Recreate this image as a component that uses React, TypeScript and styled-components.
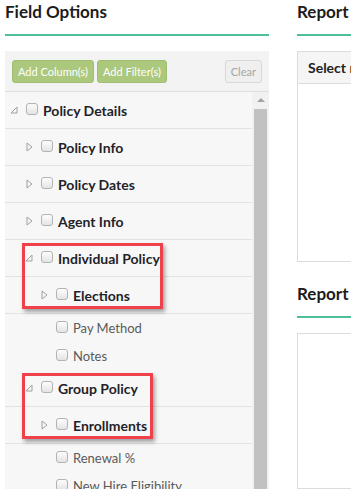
import styled, { createGlobalStyle } from 'styled-components';

const GlobalStyle = createGlobalStyle`
  html, body {
    margin: 0;
    padding: 0;
    background: #fff;
    overflow: hidden;
  }

  body {
    font-family: Lato, 'Liberation Sans', sans-serif;
  }
`;

const Page = styled.div`
  width: 640px;
  height: 489px;
  padding-left: 5px;
  box-sizing: border-box;
  display: grid;
  grid-template-columns: 264px 1fr;
  column-gap: 28px;
  overflow: hidden;
`;

const Column = styled.section`
  display: flex;
  flex-direction: column;
  min-height: 0;
`;

const SectionTitle = styled.h2<{ $spaced?: boolean }>`
  margin: ${(p) => (p.$spaced ? '20px' : '0')} 0 0;
  padding-bottom: 10px;
  font-size: 17px;
  font-weight: 700;
  line-height: 24px;
  color: #1c1c1c;
  white-space: nowrap;
  border-bottom: 2px solid #4dbf9b;
`;

const FieldPanel = styled.div`
  margin-top: 15px;
  flex: 1;
  min-height: 0;
  display: flex;
  flex-direction: column;
  background: #f7f7f7;
`;

const Toolbar = styled.div`
  height: 40px;
  padding: 0 7px;
  display: flex;
  align-items: center;
  gap: 3px;
  background: #f3f3f3;
  border-bottom: 1px solid #dedede;
`;

const ToolButton = styled.button<{ $plain?: boolean }>`
  height: 23px;
  padding: 0 5px;
  font-family: inherit;
  font-size: 11px;
  border-radius: 3px;
  border: 1px solid ${(p) => (p.$plain ? '#d8d8d8' : '#a0bf72')};
  background: ${(p) => (p.$plain ? '#efefef' : '#abc87c')};
  color: ${(p) => (p.$plain ? '#a5a5a5' : '#fff')};
  margin-left: ${(p) => (p.$plain ? 'auto' : '0')};
`;

const TreeArea = styled.div`
  flex: 1;
  min-height: 0;
  display: flex;
  overflow: hidden;
`;

const TreeList = styled.div`
  flex: 1;
  background: #f7f7f7;
`;

const Row = styled.div<{ $level: number; $leaf?: boolean }>`
  height: ${(p) => (p.$leaf ? '28px' : '36px')};
  padding-left: ${(p) => 2 + p.$level * 15}px;
  display: flex;
  align-items: center;
  border-bottom: ${(p) => (p.$leaf ? 'none' : '1px solid #e2e2e2')};
`;

const Toggle = styled.span`
  width: 14px;
  margin-right: 5px;
  flex: none;
  display: flex;
  justify-content: center;
  align-items: center;
`;

const Check = styled.span`
  width: 12px;
  height: 12px;
  margin: 0 5px 3px 0;
  flex: none;
  box-sizing: border-box;
  border: 1px solid #b3b3b3;
  border-radius: 3px;
  background: linear-gradient(#fdfdfd, #e4e4e4);
`;

const Label = styled.span<{ $leaf?: boolean }>`
  font-size: ${(p) => (p.$leaf ? '13px' : '14px')};
  font-weight: ${(p) => (p.$leaf ? 400 : 700)};
  color: ${(p) => (p.$leaf ? '#5a5a5a' : '#1f2329')};
  white-space: nowrap;
`;

// red annotation box drawn over a group of rows
const Highlight = styled.div<{ $width: number }>`
  position: relative;

  &::after {
    content: '';
    position: absolute;
    left: 17px;
    top: 3px;
    bottom: 5px;
    width: ${(p) => p.$width}px;
    box-sizing: border-box;
    border: 3px solid #f0414a;
    box-shadow: 2px 3px 4px rgba(0, 0, 0, 0.35);
    pointer-events: none;
  }
`;

const Scrollbar = styled.div`
  width: 17px;
  flex: none;
  display: flex;
  flex-direction: column;
  align-items: center;
  background: #f1f1f1;
`;

const ScrollArrow = styled.span`
  width: 0;
  height: 0;
  margin: 6px 0 7px;
  border-left: 4px solid transparent;
  border-right: 4px solid transparent;
  border-bottom: 4px solid #a3a3a3;
`;

const ScrollThumb = styled.span`
  width: 13px;
  flex: 1;
  background: #c1c1c1;
`;

const ReportBox = styled.div<{ $height?: number }>`
  margin-top: 15px;
  background: #fff;
  border: 1px solid #dcdcdc;
  box-sizing: border-box;
  ${(p) => (p.$height ? `height: ${p.$height}px;` : 'flex: 1;')}
`;

const BoxHeader = styled.div`
  height: 31px;
  padding-left: 10px;
  display: flex;
  align-items: center;
  background: #f5f5f5;
  border-bottom: 1px solid #dcdcdc;
  font-size: 14px;
  font-weight: 700;
  color: #222;
  white-space: nowrap;
`;

const Expanded = () => (
  <svg width="8" height="8" viewBox="0 0 8 8">
    <path d="M7 1 L7 7 L1 7 Z" fill="none" stroke="#a0a0a0" strokeWidth="1" />
  </svg>
);

const Collapsed = () => (
  <svg width="7" height="10" viewBox="0 0 7 10">
    <path d="M1 1 L6 5 L1 9 Z" fill="none" stroke="#a0a0a0" strokeWidth="1" />
  </svg>
);

type Node = { label: string; level: number; state?: 'open' | 'closed' };

const TreeRow = ({ label, level, state }: Node) => (
  <Row $level={level} $leaf={!state}>
    <Toggle>{state === 'open' ? <Expanded /> : state === 'closed' ? <Collapsed /> : null}</Toggle>
    <Check />
    <Label $leaf={!state}>{label}</Label>
  </Row>
);

const App = () => {
  return (
    <>
      <GlobalStyle />
      <Page>
        <Column>
          <SectionTitle>Field Options</SectionTitle>
          <FieldPanel>
            <Toolbar>
              <ToolButton>Add Column(s)</ToolButton>
              <ToolButton>Add Filter(s)</ToolButton>
              <ToolButton $plain>Clear</ToolButton>
            </Toolbar>
            <TreeArea>
              <TreeList>
                <TreeRow label="Policy Details" level={0} state="open" />
                <TreeRow label="Policy Info" level={1} state="closed" />
                <TreeRow label="Policy Dates" level={1} state="closed" />
                <TreeRow label="Agent Info" level={1} state="closed" />
                <Highlight $width={141}>
                  <TreeRow label="Individual Policy" level={1} state="open" />
                  <TreeRow label="Elections" level={2} state="closed" />
                </Highlight>
                <TreeRow label="Pay Method" level={2} />
                <TreeRow label="Notes" level={2} />
                <Highlight $width={131}>
                  <TreeRow label="Group Policy" level={1} state="open" />
                  <TreeRow label="Enrollments" level={2} state="closed" />
                </Highlight>
                <TreeRow label="Renewal %" level={2} />
                <TreeRow label="New Hire Eligibility" level={2} />
              </TreeList>
              <Scrollbar>
                <ScrollArrow />
                <ScrollThumb />
              </Scrollbar>
            </TreeArea>
          </FieldPanel>
        </Column>
        <Column>
          <SectionTitle>Report Columns</SectionTitle>
          <ReportBox $height={211}>
            <BoxHeader>Select report columns</BoxHeader>
          </ReportBox>
          <SectionTitle $spaced>Report Filters</SectionTitle>
          <ReportBox />
        </Column>
      </Page>
    </>
  );
};

export default App;
